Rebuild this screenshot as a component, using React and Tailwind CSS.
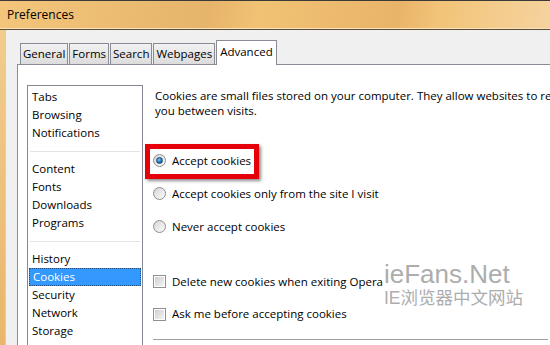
import React from "react";

const ui = { fontFamily: '"Open Sans", "Noto Sans", sans-serif' };

function Radio({ checked }) {
  return (
    <span className="relative flex h-[13px] w-[13px] shrink-0 items-center justify-center rounded-full border border-[#8e8f8f] bg-gradient-to-br from-[#d6d6d6] to-[#fbfbfb]">
      {checked && (
        <span className="h-[7px] w-[7px] rounded-full border border-[#1b4e7a] bg-[radial-gradient(circle_at_40%_35%,#7ec3f5,#1a6fb5_60%,#0d4478)]" />
      )}
    </span>
  );
}

function Check() {
  return (
    <span className="flex h-[13px] w-[13px] shrink-0 items-center justify-center border border-[#8f8f8f] bg-white">
      <span className="h-[9px] w-[9px] bg-gradient-to-br from-[#cfcfcf] to-[#f4f4f4]" />
    </span>
  );
}

const groups = [
  ["Tabs", "Browsing", "Notifications"],
  ["Content", "Fonts", "Downloads", "Programs"],
  ["History", "Cookies", "Security", "Network", "Storage"],
];

export default function App() {
  return (
    <div className="flex h-[345px] w-[550px] flex-col overflow-hidden text-[11.5px] text-black" style={ui}>
      {/* title bar */}
      <div className="flex h-[30px] shrink-0 items-center border-t border-t-[#3a3a3a] border-b border-b-[#5d4c36] bg-[linear-gradient(100deg,#f3c67c_0%,#e6b46b_38%,#f1c274_47%,#e8b46a_72%,#f2c479_80%,#f5d39f_100%)] pl-[7px] text-[12px] shadow-[inset_0_-1px_0_#fbe3b8]">
        Preferences
      </div>
      <div className="flex min-h-0 flex-1">
        <div className="w-[5px] shrink-0 bg-gradient-to-b from-[#f1cc8c] to-[#e9b66c]" />
        <div className="flex min-w-0 flex-1 flex-col border-l border-[#d4cfc6] bg-[#f0f0f0] pl-[14px] pt-[10px]">
          {/* tabs */}
          <div className="flex h-[24px] items-end">
            {["General", "Forms", "Search", "Webpages"].map((t) => (
              <div
                key={t}
                className="mr-[1px] flex h-[21px] items-center border border-b-0 border-[#898c95] bg-gradient-to-b from-[#f2f2f2] to-[#dcdcdc] px-[2px]"
              >
                {t}
              </div>
            ))}
            <div className="relative z-10 -mb-px flex h-[25px] items-center border border-b-0 border-[#898c95] bg-white px-[3px] pb-[2px]">
              Advanced
            </div>
            <div className="flex-1" />
          </div>
          {/* panel */}
          <div className="relative -ml-[3px] flex min-h-0 flex-1 border-l border-t border-[#898c95] bg-white pl-[9px] pt-[20px]">
            <div className="w-[116px] shrink-0 self-start border border-[#828790] bg-white px-[1px] pt-[2px]">
              {groups.map((g, gi) => (
                <div key={gi}>
                  {gi > 0 && (
                    <div className="flex h-[18px] items-center px-[1px]">
                      <div className="h-px w-full bg-[#e3e3e3]" />
                    </div>
                  )}
                  {g.map((it) => (
                    <div
                      key={it}
                      className={
                        "flex h-[18px] items-center pl-[3px] " +
                        (it === "Cookies" ? "border border-dotted border-[#1d4f8a] bg-[#3399ff] pl-[2px] text-white" : "")
                      }
                    >
                      {it}
                    </div>
                  ))}
                </div>
              ))}
              <div className="h-[10px]" />
            </div>
            <div className="relative ml-[12px] flex min-w-0 flex-1 flex-col pt-[3px]">
              <p className="whitespace-nowrap leading-[15px]">
                Cookies are small files stored on your computer. They allow websites to remember
                <br />
                you between visits.
              </p>
              <div className="h-[26px]" />
              <div className="relative flex h-[33px] items-center gap-[6px]">
                <span className="-ml-[2px]">
                  <Radio checked />
                </span>
                <span>Accept cookies</span>
                <div className="pointer-events-none absolute left-[-10px] top-0 h-[35px] w-[114px] border-[5px] border-[#e6000a] shadow-[2px_2px_3px_rgba(0,0,0,0.45)]" />
              </div>
              <div className="flex h-[33px] items-center gap-[6px]">
                <span className="-ml-[2px]">
                  <Radio />
                </span>
                <span>Accept cookies only from the site I visit</span>
              </div>
              <div className="flex h-[33px] items-center gap-[6px]">
                <span className="-ml-[2px]">
                  <Radio />
                </span>
                <span>Never accept cookies</span>
              </div>
              <div className="h-[22px]" />
              <div className="flex h-[33px] items-center gap-[6px]">
                <span className="-ml-[2px]">
                  <Check />
                </span>
                <span>Delete new cookies when exiting Opera</span>
              </div>
              <div className="flex h-[32px] items-center gap-[6px]">
                <span className="-ml-[2px]">
                  <Check />
                </span>
                <span>Ask me before accepting cookies</span>
              </div>
              <div className="-ml-[2px] mt-[9px] h-px w-full bg-[#a0a0a0]" />
            </div>
            {/* watermark */}
            <div className="pointer-events-none absolute left-[366px] top-[196px] flex flex-col text-[#adadad]">
              <span className="text-[26px] leading-[26px]" style={{ fontFamily: '"Liberation Sans", Arial, sans-serif' }}>
                ieFans.Net
              </span>
              <span className="mt-[1px] text-[17.5px] leading-[20px]" style={{ fontFamily: '"Liberation Sans", "Noto Sans CJK SC", sans-serif' }}>
                IE浏览器中文网站
              </span>
            </div>
          </div>
        </div>
      </div>
    </div>
  );
}
